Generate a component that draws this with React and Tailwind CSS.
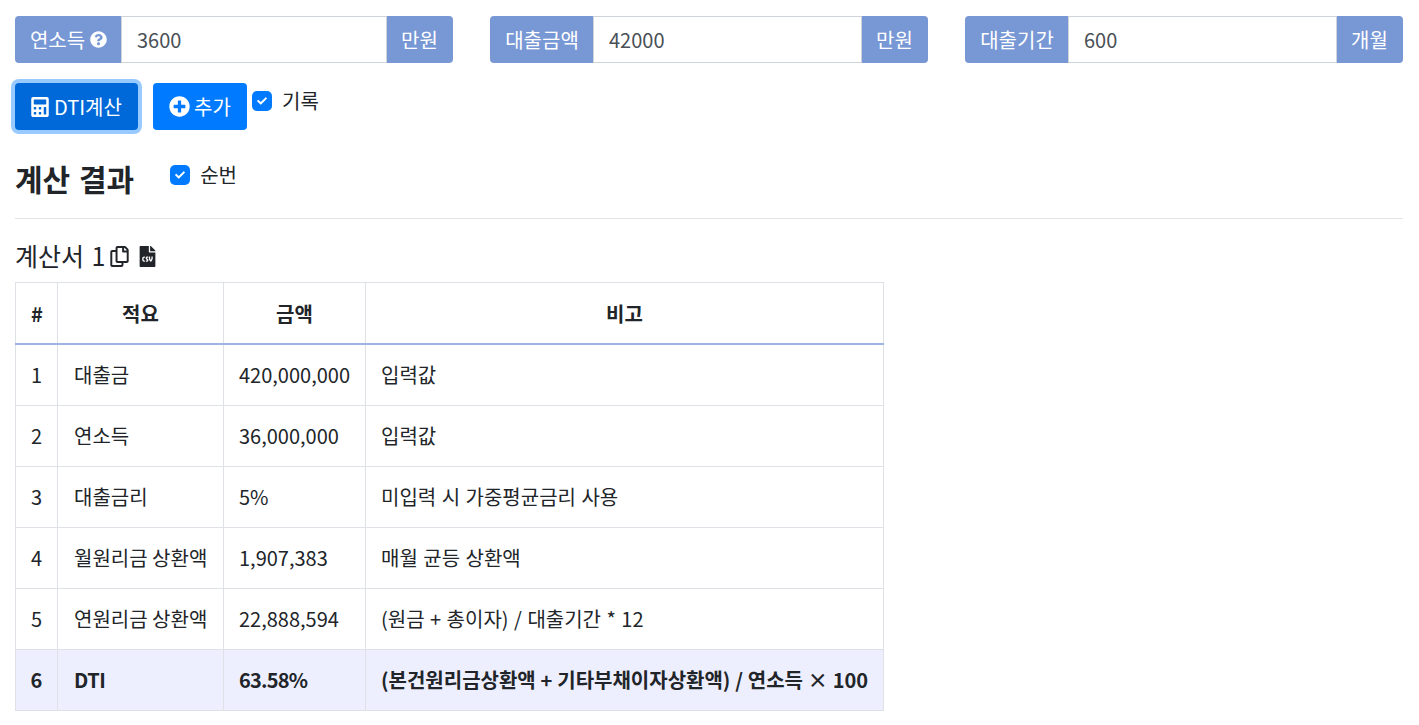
import React from "react";
import { FaQuestionCircle, FaCalculator, FaPlusCircle, FaRegCopy, FaFileCsv, FaCheck } from "react-icons/fa";

function Field({ label, icon, value, unit, labelW, unitW }) {
  return (
    <div className="flex h-[47px] w-full">
      <div className={"flex shrink-0 items-center justify-center gap-[5px] pl-[1px] bg-[#7897d5] text-white rounded-l-[4px] whitespace-nowrap " + labelW}>
        {label}
        {icon && <FaQuestionCircle className="text-[17px]" />}
      </div>
      <input
        readOnly
        value={value}
        className="flex-1 min-w-0 px-[15px] border border-[#ced4da] text-[#495057] bg-white outline-none"
      />
      <div className={"flex shrink-0 items-center justify-center pr-[1px] bg-[#7897d5] text-white rounded-r-[4px] whitespace-nowrap " + unitW}>{unit}</div>
    </div>
  );
}

function Check({ label, className = "" }) {
  return (
    <label className={"inline-flex items-start " + className}>
      <span className="w-5 h-5 rounded-[5px] bg-[#007bff] flex items-center justify-center text-white">
        <FaCheck className="text-[10px]" />
      </span>
      <span className="ml-[10px] leading-[20px] text-[#212529]">{label}</span>
    </label>
  );
}

const rows = [
  ["1", "대출금", "420,000,000", "입력값", ""],
  ["2", "연소득", "36,000,000", "입력값", ""],
  ["3", "대출금리", "5%", "미입력 시 가중평균금리 사용", "[word-spacing:1px]"],
  ["4", "월원리금 상환액", "1,907,383", "매월 균등 상환액", "[word-spacing:1px]"],
  ["5", "연원리금 상환액", "22,888,594", "(원금 + 총이자) / 대출기간 * 12", "[word-spacing:1px]"],
];

const cell = "border border-[#dee2e6] px-[15px] h-[61px] align-middle";
const head = cell + " pt-[2px] text-center font-bold border-b-2 border-b-[#9db3e4]";

export default function App() {
  return (
    <div
      className="pl-[15px] pr-[16px] pt-[16px] text-[20px] leading-[30px] text-[#212529] bg-white h-[725px] overflow-hidden"
      style={{ fontFamily: '"Noto Sans CJK KR", "Noto Sans", sans-serif' }}
    >
      <div className="grid grid-cols-3 gap-x-[37px]">
        <Field label="연소득" icon value="3600" unit="만원" labelW="w-[106px]" unitW="w-[66px]" />
        <Field label="대출금액" value="42000" unit="만원" labelW="w-[103px]" unitW="w-[66px]" />
        <Field label="대출기간" value="600" unit="개월" labelW="w-[103px]" unitW="w-[66px]" />
      </div>

      <div className="flex items-start mt-[20px]">
        <button className="h-[47px] w-[123px] flex items-center justify-center gap-[4px] pr-[1px] rounded-[4px] bg-[#0069d9] text-white shadow-[0_0_0_4px_rgba(0,123,255,0.4)]">
          <FaCalculator className="text-[20px]" />
          DTI계산
        </button>
        <button className="ml-[15px] h-[47px] w-[94px] flex items-center justify-center gap-[4px] rounded-[4px] bg-[#007bff] text-white">
          <FaPlusCircle className="text-[21px]" />
          추가
        </button>
        <Check label="기록" className="ml-[5px] mt-[8px]" />
      </div>

      <div className="flex items-start mt-[18px]">
        <h2 className="text-[30px] leading-[60px] font-bold [word-spacing:2px]">계산 결과</h2>
        <Check label="순번" className="ml-[36px] mt-[17px]" />
      </div>

      <hr className="mt-[10px] border-0 border-t border-[#e2e4e8]" />

      <div className="flex items-center mt-[17px] h-[38px] text-[25px] [word-spacing:2px]">
        계산서 1
        <FaRegCopy className="ml-[4px] mt-[2px] text-[21px]" />
        <FaFileCsv className="ml-[7px] mt-[2px] text-[21px]" />
      </div>

      <table className="mt-[8px] w-[869px] border-collapse table-fixed">
        <colgroup>
          <col className="w-[42px]" />
          <col className="w-[166px]" />
          <col className="w-[142px]" />
          <col />
        </colgroup>
        <thead>
          <tr>
            <th className={head}>#</th>
            <th className={head}>적요</th>
            <th className={head}>금액</th>
            <th className={head}>비고</th>
          </tr>
        </thead>
        <tbody>
          {rows.map((r, i) => (
            <tr key={r[0]} className={i === 0 ? "h-[62px]" : ""}>
              <td className={cell + " text-center !px-0"}>{r[0]}</td>
              <td className={cell + " whitespace-nowrap !pl-[16px]"}>{r[1]}</td>
              <td className={cell}>{r[2]}</td>
              <td className={cell + " " + r[4]}>{r[3]}</td>
            </tr>
          ))}
          <tr className="bg-[#eeeffe] font-bold">
            <td className={cell + " text-center !px-0"}>6</td>
            <td className={cell + " !pl-[16px] tracking-[-0.5px]"}>DTI</td>
            <td className={cell + " tracking-[-0.8px]"}>63.58%</td>
            <td className={cell + " whitespace-nowrap [word-spacing:0.3px]"}>(본건원리금상환액 + 기타부채이자상환액) / 연소득 × 100</td>
          </tr>
        </tbody>
      </table>
    </div>
  );
}
